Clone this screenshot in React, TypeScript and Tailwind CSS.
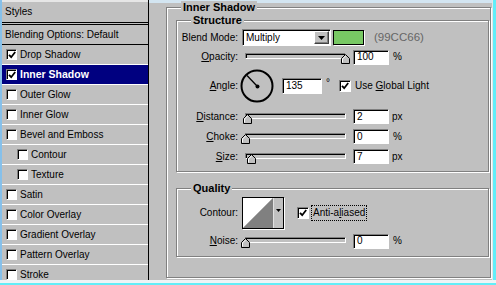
import React from 'react';

const styles = [
  { label: 'Drop Shadow', checked: true },
  { label: 'Inner Shadow', checked: true, selected: true },
  { label: 'Outer Glow' },
  { label: 'Inner Glow' },
  { label: 'Bevel and Emboss' },
  { label: 'Contour', indent: true },
  { label: 'Texture', indent: true },
  { label: 'Satin' },
  { label: 'Color Overlay' },
  { label: 'Gradient Overlay' },
  { label: 'Pattern Overlay' },
  { label: 'Stroke' },
];

const CheckBox: React.FC<{ checked?: boolean; big?: boolean }> = ({ checked, big }) => (
  <span
    className={`${big ? 'w-[12px] h-[12px]' : 'w-[11px] h-[11px]'} shrink-0 bg-white border border-t-[#808080] border-l-[#808080] border-b-white border-r-white shadow-[inset_1px_1px_0_#000] flex items-center justify-center`}
  >
    {checked && (
      <svg width="8" height="8" viewBox="0 0 8 8">
        <path d="M1 3.8 L3.2 6.2 L7.2 1" stroke="#000" strokeWidth="1.8" fill="none" />
      </svg>
    )}
  </span>
);

const Label: React.FC<{ children: React.ReactNode }> = ({ children }) => (
  <span className="w-[61px] shrink-0 text-right">{children}</span>
);

const Field: React.FC<{ value: string; wide?: boolean }> = ({ value, wide }) => (
  <div
    className={`${wide ? 'w-[40px] h-[16px]' : 'w-[36px] h-[15px]'} shrink-0 bg-white border border-t-[#808080] border-l-[#808080] border-b-white border-r-white shadow-[inset_1px_1px_0_#000] text-[10px] leading-none pl-[3px] flex items-center`}
  >
    {value}
  </div>
);

const Thumb = () => (
  <svg width="9" height="10" viewBox="0 0 9 10">
    <path d="M0.5 9.5 V4.5 L4.5 0.5 L8.5 4.5 V9.5 Z" fill="#c0c0c0" stroke="#000" />
    <path d="M1.5 8.5 V5 L4.5 2" stroke="#fff" fill="none" />
  </svg>
);

const Slider: React.FC<{ pos: number }> = ({ pos }) => (
  <div className="relative w-[110px] h-full shrink-0 ml-[3px]">
    <div className="absolute left-[4px] top-[4px] w-[101px] h-[6px] bg-[#c0c0c0] border border-t-[#808080] border-l-[#808080] border-b-white border-r-white shadow-[inset_1px_1px_0_#000]" />
    <div className="absolute top-[5px] leading-none" style={{ left: pos }}>
      <Thumb />
    </div>
  </div>
);

const Group: React.FC<{ title: string; className: string; children: React.ReactNode }> = ({ title, className, children }) => (
  <div className={`relative border border-[#808080] shadow-[1px_1px_0_#fff,inset_1px_1px_0_#fff] ${className}`}>
    <span className="absolute left-[14px] -top-[7px] px-[2px] bg-[#c0c0c0] font-bold text-[11px] leading-[12px]">{title}</span>
    {children}
  </div>
);

const StyleList = () => (
  <div className="w-[147px] shrink-0 border-r border-black flex flex-col overflow-hidden">
    <div className="h-[22px] shrink-0 border-t-2 border-t-[#e6e6e6] pl-[3px] flex items-center">Styles</div>
    <div className="h-[3px] shrink-0 border-y border-black" />
    <div className="h-[20px] shrink-0 border-b border-black pl-[3px] flex items-center">Blending Options: Default</div>
    {styles.map((s) => (
      <div
        key={s.label}
        className={`h-[20px] shrink-0 border-b border-white flex items-center gap-[3px] ${s.indent ? 'pl-[15px]' : 'pl-[4px]'} ${s.selected ? 'bg-[#000080] text-white font-bold text-[10.5px]' : ''}`}
      >
        <CheckBox checked={s.checked} />
        <span>{s.label}</span>
      </div>
    ))}
  </div>
);

const Options = () => (
  <div className="flex-1 flex flex-col">
    <div className="h-[3px] bg-[#d3e5f1]" />
    <div className="pl-[17px] pr-[1px] pt-[4px]">
      <Group title="Inner Shadow" className="h-[271px] pl-[9px] pr-[1px] pt-[12px]">
        <Group title="Structure" className="h-[152px] pt-[8px]">
          <div className="flex items-center h-[17px]">
            <Label>Blend Mode:</Label>
            <div className="ml-[4px] w-[89px] h-[17px] bg-white border border-t-[#808080] border-l-[#808080] border-b-white border-r-white shadow-[inset_1px_1px_0_#000] flex items-center">
              <span className="flex-1 pl-[3px] pt-[1px]">Multiply</span>
              <span className="w-[15px] h-[13px] mr-[1px] bg-[#c0c0c0] border border-t-white border-l-white border-b-[#404040] border-r-[#404040] shadow-[inset_-1px_-1px_0_#808080] flex items-center justify-center">
                <svg width="7" height="4" viewBox="0 0 7 4">
                  <polygon points="0,0 7,0 3.5,4" fill="#000" />
                </svg>
              </span>
            </div>
            <span className="ml-[2px] w-[31px] h-[15px] bg-[#78c864] border border-black shadow-[1px_1px_0_#fff]" />
            <span className="ml-[10px] text-[11.5px] text-[#666]">(99CC66)</span>
          </div>

          <div className="flex items-center h-[16px] mt-[3px]">
            <Label>
              <u>O</u>pacity:
            </Label>
            <Slider pos={100} />
            <span className="ml-[2px]">
              <Field value="100" />
            </span>
            <span className="ml-[4px]">%</span>
          </div>

          <div className="flex items-center h-[34px] mt-[4px]">
            <Label>
              <u>A</u>ngle:
            </Label>
            <svg className="ml-[2px] shrink-0" width="34" height="34" viewBox="0 0 34 34">
              <circle cx="17" cy="17" r="15.5" stroke="#000" strokeWidth="2" fill="none" />
              <line x1="17" y1="17" x2="7" y2="6.5" stroke="#000" strokeWidth="1.3" />
              <circle cx="17.5" cy="17.5" r="2" fill="#000" />
            </svg>
            <span className="ml-[8px]">
              <Field value="135" wide />
            </span>
            <span className="self-start mt-[9px] w-[17px] pl-[4px]">°</span>
            <CheckBox checked big />
            <span className="ml-[4px]">
              Use <u>G</u>lobal Light
            </span>
          </div>

          {[
            { l: 'D', rest: 'istance:', pos: 2, v: '2', u: 'px' },
            { l: 'C', rest: 'hoke:', pos: 0, v: '0', u: '%' },
            { l: 'S', rest: 'ize:', pos: 6, v: '7', u: 'px' },
          ].map((r, i) => (
            <div key={r.rest} className={`flex items-center h-[15px] ${i === 0 ? 'mt-[6px]' : 'mt-[5px]'}`}>
              <Label>
                <u>{r.l}</u>
                {r.rest}
              </Label>
              <Slider pos={r.pos} />
              <span className="ml-[2px]">
                <Field value={r.v} />
              </span>
              <span className={r.u === 'px' ? 'ml-[3px]' : 'ml-[4px]'}>{r.u}</span>
            </div>
          ))}
        </Group>

        <Group title="Quality" className="h-[69px] mt-[16px] pt-[8px]">
          <div className="flex items-center h-[32px]">
            <Label>Contour:</Label>
            <div className="ml-[4px] w-[42px] h-[32px] shrink-0 border border-black shadow-[1px_1px_0_#fff] flex">
              <svg width="30" height="30" viewBox="0 0 30 30">
                <polygon points="0,0 30,0 0,30" fill="#fff" />
                <polygon points="30,0 30,30 0,30" fill="#808080" />
              </svg>
              <div className="flex-1 bg-[#c0c0c0] border-l border-l-[#e0e0e0] flex justify-center pt-[11px]">
                <svg width="5" height="3" viewBox="0 0 5 3">
                  <polygon points="0,0 5,0 2.5,3" fill="#000" />
                </svg>
              </div>
            </div>
            <span className="ml-[13px]">
              <CheckBox checked big />
            </span>
            <span className="ml-[2px] px-[1px] py-[2px] border border-dotted border-black">
              Anti-a<u>l</u>iased
            </span>
          </div>
          <div className="flex items-center h-[16px] mt-[4px]">
            <Label>
              <u>N</u>oise:
            </Label>
            <Slider pos={0} />
            <span className="ml-[2px]">
              <Field value="0" />
            </span>
            <span className="ml-[4px]">%</span>
          </div>
        </Group>
      </Group>
    </div>
  </div>
);

export default function App() {
  return (
    <div className="w-[496px] h-[285px] overflow-hidden bg-[#c0c0c0] flex flex-col font-['Liberation_Sans',Arial,sans-serif] text-[10px] leading-none text-black">
      <div className="h-[280px] shrink-0 flex border-l-2 border-l-[#86c0ea]">
        <StyleList />
        <Options />
        <div className="w-[4px] shrink-0 flex">
          <div className="w-[1px] bg-[#e6e6e6]" />
          <div className="flex-1 bg-[#62eef8]" />
        </div>
      </div>
      <div className="h-[3px] shrink-0 bg-[#eef4f6]" />
      <div className="h-[2px] shrink-0 bg-[#62eef8]" />
    </div>
  );
}
